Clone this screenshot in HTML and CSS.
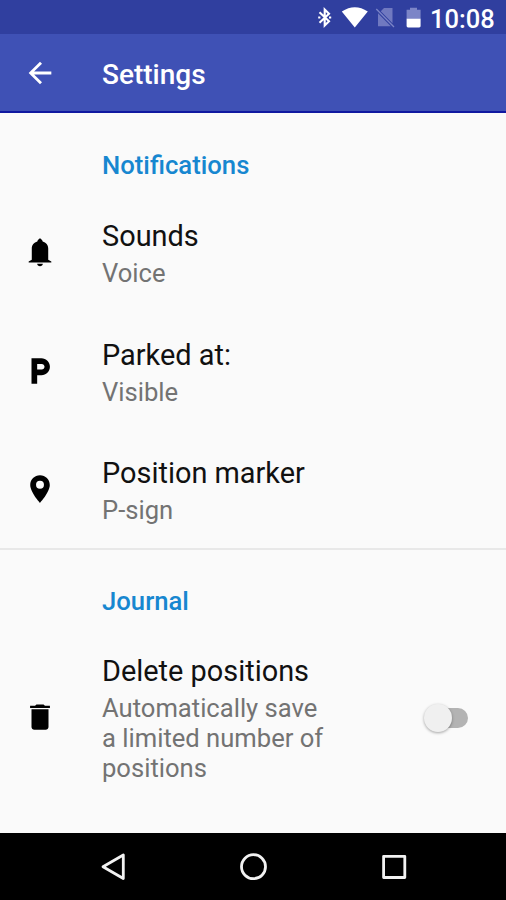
FILE: index.html
```html
<!DOCTYPE html>
<html lang="en">
<head>
<meta charset="utf-8">
<title>Settings</title>
<link rel="stylesheet" href="styles.css">
</head>
<body>
<div class="screen">
  <div class="status-bar">
    <svg class="status-icons" viewBox="0 0 126 34">
      <path d="M19.500 12.300l9.500 9-4.300 4.200V9.500l4.300 4.200-9.500 9" fill="none" stroke="#fff" stroke-width="2.100"/>
      <path d="M18.200 17.500h2.200M29 17.500h2.200" stroke="#fff" stroke-width="2.200"/>
      <path d="M41.800 11.600Q54.800 2.800 67.800 11.600L54.800 27.400Z" fill="#fff"/>
      <path d="M84 8H92.500V23.200L80.800 11.300Z" fill="#7079c0"/>
      <path d="M78 13.200L90.800 26.200H78Z" fill="#7079c0"/>
      <path d="M76.300 9L94 27" stroke="#7c85c7" stroke-width="1.300"/>
      <path d="M110 7.800h7v2h3.600V19h-14V9.800h3.400z" fill="#7c85c7"/>
      <path d="M106.600 18.800h14v7.200q0 1.400-1.400 1.400H108q-1.400 0-1.400-1.400z" fill="#fff"/>
    </svg>
    <span class="clock">10:08</span>
  </div>
  <header class="app-bar">
    <svg class="icon" viewBox="0 0 24 24"><path fill="#fff" d="M20 11H7.830l5.590-5.590L12 4l-8 8 8 8 1.410-1.410L7.830 13H20v-2z"/></svg>
    <h1 class="title">Settings</h1>
  </header>
  <main class="content">
    <h2 class="category">Notifications</h2>
    <div class="item">
      <svg class="icon" viewBox="0 0 24 24"><path d="M10 20.300h4c0 .9-.9 1.700-2 1.700s-2-.8-2-1.700z"/><path d="M17.800 17.500V9.600c0-2.500-1.600-4.300-3.900-5C13.600 3.400 12.600 2.600 12 2.300c-.6.3-1.600 1.100-1.900 2.300-2.300.7-3.900 2.500-3.900 5v7.900L4 18.700v.7h16v-.7z"/></svg>
      <div class="text"><div class="name">Sounds</div><div class="summary">Voice</div></div>
    </div>
    <div class="item">
      <svg class="icon" viewBox="0 0 24 24"><path d="M13 3H6v18h4v-6h3c3.310 0 6-2.690 6-6s-2.690-6-6-6zm.2 8H10V7h3.200c1.100 0 2 .9 2 2s-.9 2-2 2z"/></svg>
      <div class="text"><div class="name">Parked at:</div><div class="summary">Visible</div></div>
    </div>
    <div class="item">
      <svg class="icon" viewBox="0 0 24 24"><path fill-rule="evenodd" d="M12 2.300C8.130 2.300 5.100 5.300 5.100 9.100 5.100 14.200 12 21.700 12 21.700s6.900-7.500 6.900-12.600c0-3.800-3.030-6.800-6.900-6.800zm0 9.500a2.800 2.800 0 0 1 0-5.600 2.800 2.800 0 0 1 0 5.600z"/></svg>
      <div class="text"><div class="name">Position marker</div><div class="summary">P-sign</div></div>
    </div>
    <hr class="divider">
    <h2 class="category journal">Journal</h2>
    <div class="item tall">
      <svg class="icon" viewBox="0 0 24 24"><path d="M6 19c0 1.100.9 2 2 2h8c1.100 0 2-.9 2-2V6.600H6V19zM19 4h-3.500l-1-.9h-5l-1 .9H5v1.600h14V4z"/></svg>
      <div class="text"><div class="name">Delete positions</div><div class="summary">Automatically save<br>a limited number of<br>positions</div></div>
      <div class="switch"><span class="thumb"></span></div>
    </div>
  </main>
  <nav class="nav-bar">
    <svg viewBox="0 0 506 67" fill="none" stroke="#f2f2f2" stroke-width="2.800" stroke-linejoin="round">
      <path d="M103 33.700L123.300 22V45.500Z"/>
      <circle cx="253.500" cy="33.700" r="12"/>
      <rect x="383.600" y="23.300" width="21.200" height="21.200"/>
    </svg>
  </nav>
</div>
</body>
</html>
```
FILE: styles.css
```css
body {
  margin: 0;
  font-family: Roboto, sans-serif;
  background: #fafafa;
}

.screen {
  width: 506px;
  height: 900px;
  display: flex;
  flex-direction: column;
  overflow: hidden;
}

.status-bar {
  height: 34px;
  flex: none;
  display: flex;
  justify-content: flex-end;
  align-items: center;
  padding-right: 12px;
  background: #303f9f;
  color: #fff;
}

.status-icons {
  width: 126px;
  height: 34px;
}

.clock {
  width: 64px;
  margin-left: 4px;
  font-size: 25.500px;
  font-weight: 500;
  line-height: 34px;
  padding-top: 4px;
  white-space: nowrap;
}

.app-bar {
  height: 79px;
  flex: none;
  box-sizing: border-box;
  display: flex;
  align-items: center;
  padding-left: 23px;
  background: #3f51b5;
  border-bottom: 2px solid #1018a0;
}

.app-bar .icon {
  margin-top: 1px;
}

.icon {
  width: 34px;
  height: 34px;
  flex: none;
}

.title {
  margin: 4px 0 0 45px;
  font-size: 28px;
  font-weight: 500;
  line-height: 34px;
  color: #fff;
}

.content {
  flex: 1;
  min-height: 0;
}

.category {
  margin: 0;
  padding: 37px 0 14.400px 102px;
  font-size: 25.700px;
  font-weight: 500;
  line-height: 30px;
  color: #1787d0;
}

.item {
  height: 118.500px;
  display: flex;
  align-items: center;
  padding-left: 23px;
}

.item .icon {
  margin-bottom: 3px;
}

.text {
  width: 250px;
  margin-left: 45px;
}

.name {
  font-size: 28.900px;
  line-height: 34px;
  margin-bottom: 5px;
  color: #111;
}

.summary {
  font-size: 25.600px;
  line-height: 30px;
  color: #737373;
}

.divider {
  height: 2px;
  margin: -2px 0 0;
  border: 0;
  background: #e8e8e8;
}

.journal {
  padding: 36px 0 14px 102px;
}

.tall {
  height: 178px;
}

.switch {
  position: relative;
  width: 42px;
  height: 20px;
  margin: 0 0 2px 74px;
  border-radius: 10px;
  background: #b3b3b3;
}

.thumb {
  position: absolute;
  left: -2px;
  top: -4px;
  width: 28px;
  height: 28px;
  border-radius: 50%;
  background: #f0f0f0;
  box-shadow: 0 1px 3px rgba(0, 0, 0, .35);
}

.nav-bar {
  height: 67px;
  flex: none;
  background: #000;
}

.nav-bar svg {
  display: block;
  width: 506px;
  height: 67px;
}
```
